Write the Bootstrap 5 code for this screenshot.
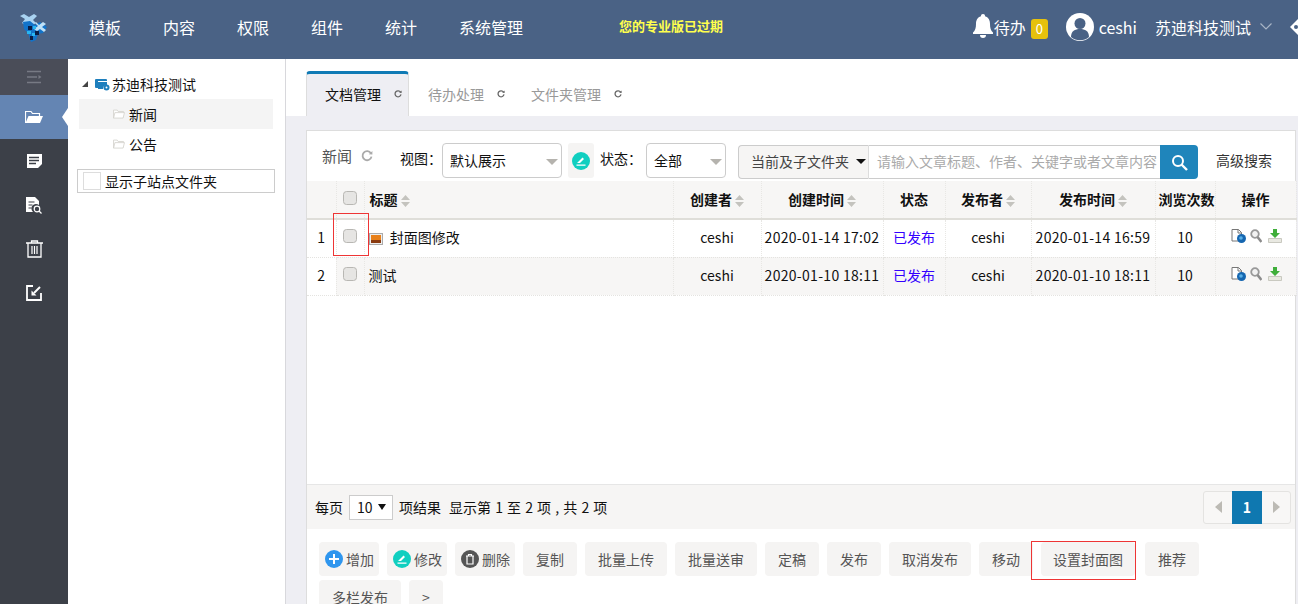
<!DOCTYPE html>
<html lang="zh-CN">
<head>
    <meta charset="UTF-8">
    <meta name="viewport" content="width=device-width, initial-scale=1.0">
    <title>文档管理</title>
    <link href="https://cdn.jsdelivr.net/npm/bootstrap@5.3.0/dist/css/bootstrap.min.css" rel="stylesheet">
    <script src="https://cdn.jsdelivr.net/npm/bootstrap@5.3.0/dist/js/bootstrap.bundle.min.js"></script>
    <style>
        html, body { height: 100%; overflow: hidden; }
        body { font-family: "Noto Sans CJK SC", "Liberation Sans", sans-serif; font-size: 14px; line-height: 20px; color: #111; background: #fff; }
        a { text-decoration: none; }

        .top-bar { height: 59px; background: #4a6285; color: #fff; flex: none; }
        .top-logo { width: 68px; margin-top: -4px; padding-right: 2px; }
        .top-menu { gap: 42px; margin: -6px 0 0 21px; font-size: 16px; }
        .top-menu a { color: #fff; }
        .top-warn { margin-left: 96px; font-size: 13px; font-weight: 700; color: #ffff4d; margin-top: -8px; }
        .top-right { margin: -6px 0 0 auto; font-size: 16px; color: #fff; }
        .bell-icon { margin-right: 1px; }
        .avatar-icon { margin-right: 5px; }
        .todo-num { width: 17px; height: 20px; background: #e6c10c; border-radius: 3px; font-size: 13px; display: flex; align-items: center; justify-content: center; margin: 4px 18px 0 5px; }
        .site-name { margin-left: 18px; }
        .site-caret { margin-left: 9px; }

        .side-rail { width: 68px; background: #3c4048; flex: none; }
        .rail-toggle { height: 36px; background: #4a4d58; }
        .rail-item { height: 44px; position: relative; }
        .rail-item.active { background: #6485b3; }
        .rail-item.active::after { content: ""; position: absolute; right: 0; top: 13px; border: 9px solid transparent; border-right-color: #fff; border-left: 0; border-right-width: 6px; }

        .tree-pane { width: 218px; border-right: 1px solid #d8d8dc; flex: none; padding: 15px 10px 0 9px; font-size: 14px; }
        .tree-root { height: 20px; padding-left: 5px; margin-bottom: 5px; }
        .tree-caret { margin-right: 7px; }
        .tree-site { margin-right: 2px; }
        .tree-leaf { height: 30px; padding-left: 34px; margin: 0 2px 0 2px; gap: 4px; }
        .tree-leaf.current { background: #f4f4f4; }
        .subsite-box { height: 24px; margin-top: 10px; border: 1px solid #ccc; padding-left: 5px; gap: 4px; }
        .subsite-box span { width: 18px; height: 18px; border: 1px solid #ddd; background: #fff; }

        .work-area { background: #eeeef3; min-width: 0; }
        .tab-strip { height: 57px; background: #fff; padding: 12px 0 0 20px; flex: none; }
        .tab-entry { height: 45px; color: #999; padding: 0 0 0 19px; gap: 13px; width: 103px; }
        .tab-entry.active { background: #eeeef3; color: #111; border: 1px solid #ddd; border-bottom: 0; border-top: 3px solid #0f7ab5; border-radius: 4px 4px 0 0; padding: 0 0 2px 18px; }
        .tab-entry.plain2 { width: 117px; padding-left: 19px; }
        .tab-entry.plain3 { width: 120px; padding-left: 5px; }

        .doc-panel { margin: 14px 2px 0 20px; background: #fff; border: 1px solid #ddd; border-bottom: 0; flex-grow: 1; }
        .doc-tools { height: 50px; padding-top: 12px; }
        .folder-title { font-size: 15px; color: #555; margin: -12px 0 0 15px; width: 32px; white-space: nowrap; }
        .folder-spin { margin: -12px 0 0 7px; }
        .tool-label { white-space: nowrap; margin-top: -8px; }
        .label-view { margin-left: 27px; }
        .label-state { margin: -8px 4px 0 6px; }
        .fake-select { height: 35px; border: 1px solid #ccc; border-radius: 4px; padding: 0 0 2px 7px; background: #fff; position: relative; }
        .fake-select::after { content: ""; position: absolute; right: 3px; top: 15px; border: 6px solid transparent; border-top: 6px solid #b5b3ae; border-bottom: 0; }
        .pick-view { width: 120px; }
        .pick-state { width: 80px; }
        .edit-chip { width: 26px; height: 35px; background: #f5f4f3; border-radius: 3px; margin-left: 6px; }
        .search-wrap { height: 34px; margin: 2px 0 0 12px; width: 460px; }
        .search-scope { width: 131px; background: #f6f5f4; border: 1px solid #ccc; border-right: 1px solid #ddd; border-radius: 4px 0 0 4px; padding: 0 0 2px 12px; color: #444; white-space: nowrap; }
        .search-scope::after { content: ""; border: 5px solid transparent; border-top: 5px solid #111; border-bottom: 0; margin-left: 7px; }
        .search-input { width: 291px; border: 1px solid #ccc; border-width: 1px 0; padding: 0 0 2px 8px; font-size: 14px; font-family: inherit; outline: 0; min-width: 0; }
        .search-input::placeholder { color: #aaa; }
        .search-go { width: 38px; background: #1f85bb; border-radius: 0 4px 4px 0; }
        .adv-search { margin: -4px 0 0 18px; color: #333; white-space: nowrap; }

        .doc-table-box { height: 303px; }
        .doc-table { table-layout: fixed; width: 989px; margin: 0; color: #111; }
        .doc-table th, .doc-table td { padding: 0; text-align: center; vertical-align: middle; border-bottom: 1px dotted #e4e3e0; border-right: 1px dotted #e8e7e4; white-space: nowrap; background: #fff; box-shadow: none; }
        .doc-table thead th { height: 38px; background: #f7f6f5; border-bottom: 2px solid #dfded9; color: #111; font-weight: 700; font-size: 14px; padding-bottom: 2px; }
        .doc-table thead th.nudge-cell { padding-left: 3px; }
        .doc-table tbody td { height: 38px; padding-bottom: 2px; }
        .doc-table tbody tr.even-row td { background: #f7f6f5; }
        .doc-table tbody tr.even-row td:first-child { background: #fff; }
        .doc-table .title-cell { text-align: left; }
        .doc-table th.title-cell { padding-left: 5px; }
        .doc-table td.title-cell { padding-left: 4px; }
        .doc-check { width: 14px; height: 14px; margin: -5px 0 0 0; background-color: #e6e5e3; border: 1px solid #b8b7b3; border-radius: 3px; display: inline-block; vertical-align: middle; }
        .doc-table tbody .doc-check { margin-top: -7px; }
        .red-cell { position: relative; }
        .red-cell::after { content: ""; position: absolute; left: -4px; right: -5px; top: -7px; bottom: 1px; border: 1px solid #ee3535; pointer-events: none; }
        .state-link { color: #3300ff; }
        .date-cell { letter-spacing: .3px; }
        .op-icons { margin-top: -2px; padding-left: 15px; }
        .op-lens { margin: 0 6px 0 4px; }

        .list-foot { height: 45px; background: #f6f5f4; border-top: 1px solid #e6e6e6; padding: 0 4px 0 8px; }
        .size-pick { width: 44px; height: 25px; border: 1px solid #ccc; background: #fff; margin: 0 6px; padding: 0 0 0 7px; position: relative; }
        .size-pick::after { content: ""; position: absolute; right: 6px; top: 8px; border: 4px solid transparent; border-top: 6px solid #111; border-bottom: 0; }
        .range-text { margin-left: 8px; word-spacing: 1px; }
        .pager { margin: 0; --bs-pagination-border-radius: 3px; }
        .pager .page-link { width: 30px; height: 33px; padding: 0; display: flex; align-items: center; justify-content: center; background: #f8f7f6; border-color: #e4e3e1; font-size: 14px; box-shadow: none; }
        .pager .active .page-link { background: #0f78b0; border-color: #0f78b0; color: #fff; font-weight: 700; }

        .action-bar { padding: 13px 12px 0; gap: 4px 8px; }
        .act-btn { height: 34px; background: #f5f4f3; color: #555; font-size: 14px; line-height: 20px; border: 0; border-radius: 4px; padding: 0 13px; white-space: nowrap; }
        .act-btn.with-icon { padding: 0 5px 0 6px; gap: 3px; width: 60px; display: inline-flex; align-items: center; }
        .act-btn.cover-btn { padding: 0 12px; }
        .cover-wrap { position: relative; margin-right: 2px; }
        .cover-frame { position: absolute; z-index: 2; left: -10px; top: -1px; pointer-events: none; }
    </style>
</head>
<body class="d-flex flex-column">

    <svg width="0" height="0" class="position-absolute">
        <symbol id="sort" viewBox="0 0 9 12"><path d="M4.500 0 9 5H0zM0 7h9l-4.500 5z" fill="#c4c3be"/></symbol>
        <symbol id="spin" viewBox="0 0 8 8"><path d="M6.600 2.200A3 3 0 1 0 7 4.400" fill="none" stroke="#666" stroke-width="1.300"/><path d="M5.200 2.800 7.600 3V.6z" fill="#666"/></symbol>
        <symbol id="pen" viewBox="0 0 18 18"><circle cx="9" cy="9" r="9" fill="#10cfc0"/><path d="M4.500 12.500h9v1.200h-9zM5 11l5.500-5.500 1.500 1.500-4 4z" fill="#fff"/></symbol>
        <symbol id="leaf" viewBox="0 0 13 11"><path d="M.5 10V1.200h4l1 1.500h6V4M.5 10l1.500-6h10.500l-1.500 6z" fill="#fff" stroke="#d6d5d0"/></symbol>
        <symbol id="docview" viewBox="0 0 15 14"><path d="M1 .5h6.500l3 3V12H1z" fill="#fff" stroke="#777"/><path d="M7 .5v3.500h3.500" fill="none" stroke="#777"/><circle cx="10.500" cy="9.500" r="4.500" fill="#1566b0"/><circle cx="10" cy="9" r="1.800" fill="#5ab0e6"/></symbol>
        <symbol id="lens" viewBox="0 0 12 14"><circle cx="5" cy="5" r="3.800" fill="#f2f2f2" stroke="#999" stroke-width="1.800"/><path d="M7.500 8 11.500 13" stroke="#8c8c8c" stroke-width="2.600"/></symbol>
        <symbol id="down" viewBox="0 0 14 14"><path d="M5 0h4v4h3L7 9 2 4h3z" fill="#3fae3a"/><path d="M.5 9.500h13v4H.5z" fill="#e9e9e2" stroke="#c9c9c0"/></symbol>
    </svg>

    <header class="top-bar d-flex align-items-center">
        <div class="top-logo d-flex justify-content-center">
            <svg width="32" height="30" viewBox="0 0 32 30">
                <path d="M3 3 7 1l5 3 5-3 3 2-4 4 3 3-3 2-4-3-4 3-3-2 3-4z" fill="#a9d3f2"/>
                <path d="M6 9l7-1 5 4 5-3 7 5-4 6-5 1-2 6-5 2-3-9-4-4z" fill="#1273c9"/>
                <path d="M19 9l3 3 4-3 3 2-4 3 4 3-2 2-4-3-3 2-3-2 4-3-3-3z" fill="#bfe0f5"/>
                <path d="M11 13h4v4h-4zM18 18h4v4h-4zM13 23h3v4h-3z" fill="#0a1d44"/>
                <path d="M16 13h3v3h-3zM10 18h4v3h-4zM15 20h3v3h-3z" fill="#29b6f0"/>
            </svg>
        </div>
        <nav class="top-menu d-flex">
            <a href="#">模板</a><a href="#">内容</a><a href="#">权限</a><a href="#">组件</a><a href="#">统计</a><a href="#">系统管理</a>
        </nav>
        <div class="top-warn">您的专业版已过期</div>
        <div class="top-right d-flex align-items-center">
            <svg width="20" height="25" viewBox="0 0 20 25" class="bell-icon"><path d="M10 0a2 2 0 0 1 2 2.300c3.500 1 5 4 5 7.700 0 4 .8 6.500 3 8.500v1.500H0v-1.500c2.200-2 3-4.500 3-8.500 0-3.700 1.500-6.700 5-7.700A2 2 0 0 1 10 0zM7 21h6a3 3 0 0 1-6 0z" fill="#fff"/></svg>
            <span>待办</span>
            <span class="todo-num">0</span>
            <svg width="28" height="28" viewBox="0 0 28 28" class="avatar-icon"><circle cx="14" cy="14" r="14" fill="#fff"/><circle cx="14" cy="10.500" r="5.500" fill="#4a6285"/><path d="M5 24c0-6 4-8 9-8s9 2 9 8a14 14 0 0 1-18 0z" fill="#4a6285"/></svg>
            <span>ceshi</span>
            <span class="site-name">苏迪科技测试</span>
            <svg width="12" height="7" viewBox="0 0 12 7" class="site-caret"><path d="M.5.500 6 6l5.500-5.500" fill="none" stroke="#a9b5c6" stroke-width="1.200"/></svg>
            <svg width="26" height="16" viewBox="0 0 26 16"><path d="M18 8 26 0v16z" fill="#fff"/><circle cx="24" cy="8" r="2" fill="#4a6285"/></svg>
        </div>
    </header>

    <div class="d-flex flex-grow-1 overflow-hidden">
        <aside class="side-rail">
            <div class="rail-toggle d-flex align-items-center justify-content-center">
                <svg width="16" height="14" viewBox="0 0 16 14"><path d="M1 1.500h14M1 7h10M1 12.500h14" stroke="#777a84" stroke-width="1.500"/><path d="M12.500 5v4l3-2z" fill="#777a84"/></svg>
            </div>
            <div class="rail-item active d-flex align-items-center justify-content-center">
                <svg width="18" height="14" viewBox="0 0 18 14"><path d="M.5 13V1.500h5.500l1.500 2h7V6" fill="none" stroke="#fff" stroke-width="1.200"/><path d="M.5 13 3.500 6H18l-3 7z" fill="#fff"/></svg>
            </div>
            <div class="rail-item d-flex align-items-center justify-content-center">
                <svg width="16" height="14" viewBox="0 0 16 14"><path d="M1 0h15v10l-4 4H1z" fill="#fff"/><path d="M3 3.500h10M3 6.500h10M3 9.500h7" stroke="#3c4048" stroke-width="1.400"/></svg>
            </div>
            <div class="rail-item d-flex align-items-center justify-content-center">
                <svg width="16" height="17" viewBox="0 0 16 17"><path d="M0 0h9l4 4v4a4.500 4.500 0 0 0-6 7H0z" fill="#fff"/><path d="M2.500 5h6M2.500 8h4M2.500 11h3" stroke="#3c4048" stroke-width="1.200"/><circle cx="11" cy="12" r="2.800" fill="none" stroke="#fff" stroke-width="1.200"/><path d="M13 14l2.500 2.500" stroke="#fff" stroke-width="1.300"/></svg>
            </div>
            <div class="rail-item d-flex align-items-center justify-content-center">
                <svg width="17" height="18" viewBox="0 0 17 18"><path d="M0 3h17M5.500 3V1h6v2M2 3.500V17h13V3.500" fill="none" stroke="#fff" stroke-width="1.300"/><path d="M6 6v8M8.500 6v8M11 6v8" stroke="#fff" stroke-width="1.200"/></svg>
            </div>
            <div class="rail-item d-flex align-items-center justify-content-center">
                <svg width="16" height="16" viewBox="0 0 16 16"><path d="M7 1H1v14h14V8" fill="none" stroke="#fff" stroke-width="1.800"/><path d="M14 2 8 8" stroke="#fff" stroke-width="2"/><path d="M5.500 5.500v5h5z" fill="#fff"/></svg>
            </div>
        </aside>

        <section class="tree-pane">
            <div class="tree-root d-flex align-items-center">
                <svg width="6" height="6" viewBox="0 0 6 6" class="tree-caret"><path d="M6 0v6H0z" fill="#444"/></svg>
                <svg width="15" height="13" viewBox="0 0 15 13" class="tree-site"><path d="M0 2a1 1 0 0 1 1-1h10a1 1 0 0 1 1 1v1H3v7H1a1 1 0 0 1-1-1z" fill="#1e7fbd"/><path d="M3 4h9v3a4 4 0 0 0-4 4H3z" fill="#1e7fbd"/><circle cx="11.500" cy="9.500" r="3" fill="#1e7fbd"/><circle cx="11.500" cy="9.500" r="1" fill="#fff"/></svg>
                <span>苏迪科技测试</span>
            </div>
            <div class="tree-leaf current d-flex align-items-center"><svg width="12" height="10"><use href="#leaf"/></svg><span>新闻</span></div>
            <div class="tree-leaf d-flex align-items-center"><svg width="12" height="10"><use href="#leaf"/></svg><span>公告</span></div>
            <div class="subsite-box d-flex align-items-center"><span></span>显示子站点文件夹</div>
        </section>

        <main class="work-area flex-grow-1 d-flex flex-column">
            <div class="tab-strip d-flex">
                <a href="#" class="tab-entry active d-flex align-items-center"><span>文档管理</span><svg width="8" height="8"><use href="#spin"/></svg></a>
                <a href="#" class="tab-entry plain2 d-flex align-items-center"><span>待办处理</span><svg width="8" height="8"><use href="#spin"/></svg></a>
                <a href="#" class="tab-entry plain3 d-flex align-items-center"><span>文件夹管理</span><svg width="8" height="8"><use href="#spin"/></svg></a>
            </div>

            <div class="doc-panel">
                <div class="doc-tools d-flex align-items-start">
                    <div class="folder-title align-self-center">新闻</div>
                    <svg width="12" height="12" viewBox="0 0 8 8" class="folder-spin align-self-center"><path d="M6.600 2.200A3 3 0 1 0 7 4.400" fill="none" stroke="#aaa" stroke-width="1.200"/><path d="M5.200 2.800 7.600 3V.6z" fill="#aaa"/></svg>
                    <span class="tool-label label-view align-self-center">视图：</span>
                    <div class="fake-select pick-view d-flex align-items-center">默认展示</div>
                    <div class="edit-chip d-flex align-items-center justify-content-center"><svg width="18" height="18"><use href="#pen"/></svg></div>
                    <span class="tool-label label-state align-self-center">状态：</span>
                    <div class="fake-select pick-state d-flex align-items-center">全部</div>
                    <div class="search-wrap d-flex">
                        <div class="search-scope d-flex align-items-center">当前及子文件夹</div>
                        <input class="search-input" type="text" placeholder="请输入文章标题、作者、关键字或者文章内容">
                        <div class="search-go d-flex align-items-center justify-content-center">
                            <svg width="17" height="17" viewBox="0 0 17 17"><circle cx="7" cy="7" r="5" fill="none" stroke="#fff" stroke-width="2"/><path d="M10.500 10.500 16 16" stroke="#fff" stroke-width="2.400"/></svg>
                        </div>
                    </div>
                    <a href="#" class="adv-search align-self-center">高级搜索</a>
                </div>

                <div class="doc-table-box">
                    <table class="table doc-table">
                        <colgroup>
                            <col style="width:29px"><col style="width:28px"><col style="width:309px"><col style="width:88px"><col style="width:122px"><col style="width:62px"><col style="width:86px"><col style="width:124px"><col style="width:60px"><col style="width:81px">
                        </colgroup>
                        <thead>
                            <tr>
                                <th></th>
                                <th><input type="checkbox" class="doc-check form-check-input"></th>
                                <th class="title-cell">标题 <svg width="9" height="12"><use href="#sort"/></svg></th>
                                <th>创建者 <svg width="9" height="12"><use href="#sort"/></svg></th>
                                <th>创建时间 <svg width="9" height="12"><use href="#sort"/></svg></th>
                                <th>状态</th>
                                <th>发布者 <svg width="9" height="12"><use href="#sort"/></svg></th>
                                <th>发布时间 <svg width="9" height="12"><use href="#sort"/></svg></th>
                                <th class="nudge-cell">浏览次数</th>
                                <th>操作</th>
                            </tr>
                        </thead>
                        <tbody>
                            <tr>
                                <td>1</td>
                                <td class="red-cell"><input type="checkbox" class="doc-check form-check-input"></td>
                                <td class="title-cell">
                                    <svg width="14" height="12" viewBox="0 0 14 12" class="me-1"><rect x=".5" y=".5" width="13" height="11" fill="#eee" stroke="#aaa"/><rect x="2" y="2" width="10" height="8" fill="#e8801a"/><path d="M2 7h10v3H2z" fill="#8a3a10"/></svg>
                                    封面图修改
                                </td>
                                <td>ceshi</td>
                                <td class="date-cell">2020-01-14 17:02</td>
                                <td class="state-link">已发布</td>
                                <td>ceshi</td>
                                <td class="date-cell">2020-01-14 16:59</td>
                                <td>10</td>
                                <td><div class="op-icons d-flex"><svg width="15" height="14"><use href="#docview"/></svg><svg width="12" height="14" class="op-lens"><use href="#lens"/></svg><svg width="14" height="14"><use href="#down"/></svg></div></td>
                            </tr>
                            <tr class="even-row">
                                <td>2</td>
                                <td><input type="checkbox" class="doc-check form-check-input"></td>
                                <td class="title-cell">测试</td>
                                <td>ceshi</td>
                                <td class="date-cell">2020-01-10 18:11</td>
                                <td class="state-link">已发布</td>
                                <td>ceshi</td>
                                <td class="date-cell">2020-01-10 18:11</td>
                                <td>10</td>
                                <td><div class="op-icons d-flex"><svg width="15" height="14"><use href="#docview"/></svg><svg width="12" height="14" class="op-lens"><use href="#lens"/></svg><svg width="14" height="14"><use href="#down"/></svg></div></td>
                            </tr>
                        </tbody>
                    </table>
                </div>

                <div class="list-foot d-flex align-items-center">
                    <span>每页</span>
                    <div class="size-pick d-flex align-items-center">10</div>
                    <span>项结果</span>
                    <span class="range-text">显示第 1 至 2 项 , 共 2 项</span>
                    <ul class="pagination pager ms-auto">
                        <li class="page-item"><a class="page-link" href="#"><svg width="7" height="12" viewBox="0 0 7 12"><path d="M7 0v12L0 6z" fill="#bcbab4"/></svg></a></li>
                        <li class="page-item active"><a class="page-link" href="#">1</a></li>
                        <li class="page-item"><a class="page-link" href="#"><svg width="7" height="12" viewBox="0 0 7 12"><path d="M0 0v12l7-6z" fill="#bcbab4"/></svg></a></li>
                    </ul>
                </div>

                <div class="action-bar d-flex flex-wrap">
                    <button class="btn act-btn with-icon"><svg width="18" height="18" viewBox="0 0 18 18"><circle cx="9" cy="9" r="9" fill="#2f96ee"/><path d="M4 9h10M9 4v10" stroke="#fff" stroke-width="2"/></svg>增加</button>
                    <button class="btn act-btn with-icon"><svg width="18" height="18"><use href="#pen"/></svg>修改</button>
                    <button class="btn act-btn with-icon"><svg width="18" height="18" viewBox="0 0 18 18"><circle cx="9" cy="9" r="9" fill="#555"/><path d="M5 6h8M7.500 6V4.500h3V6M6 6.500V14h6V6.500" fill="none" stroke="#fff" stroke-width="1.200"/></svg>删除</button>
                    <button class="btn act-btn">复制</button>
                    <button class="btn act-btn">批量上传</button>
                    <button class="btn act-btn">批量送审</button>
                    <button class="btn act-btn">定稿</button>
                    <button class="btn act-btn">发布</button>
                    <button class="btn act-btn">取消发布</button>
                    <button class="btn act-btn">移动</button>
                    <div class="cover-wrap"><button class="btn act-btn cover-btn">设置封面图</button><svg class="cover-frame" width="105" height="39" viewBox="0 0 105 39"><rect x=".5" y=".5" width="104" height="38" fill="none" stroke="#ee3535"/></svg></div>
                    <button class="btn act-btn">推荐</button>
                    <button class="btn act-btn">多栏发布</button>
                    <button class="btn act-btn">&gt;</button>
                </div>
            </div>
        </main>
    </div>
</body>
</html>
